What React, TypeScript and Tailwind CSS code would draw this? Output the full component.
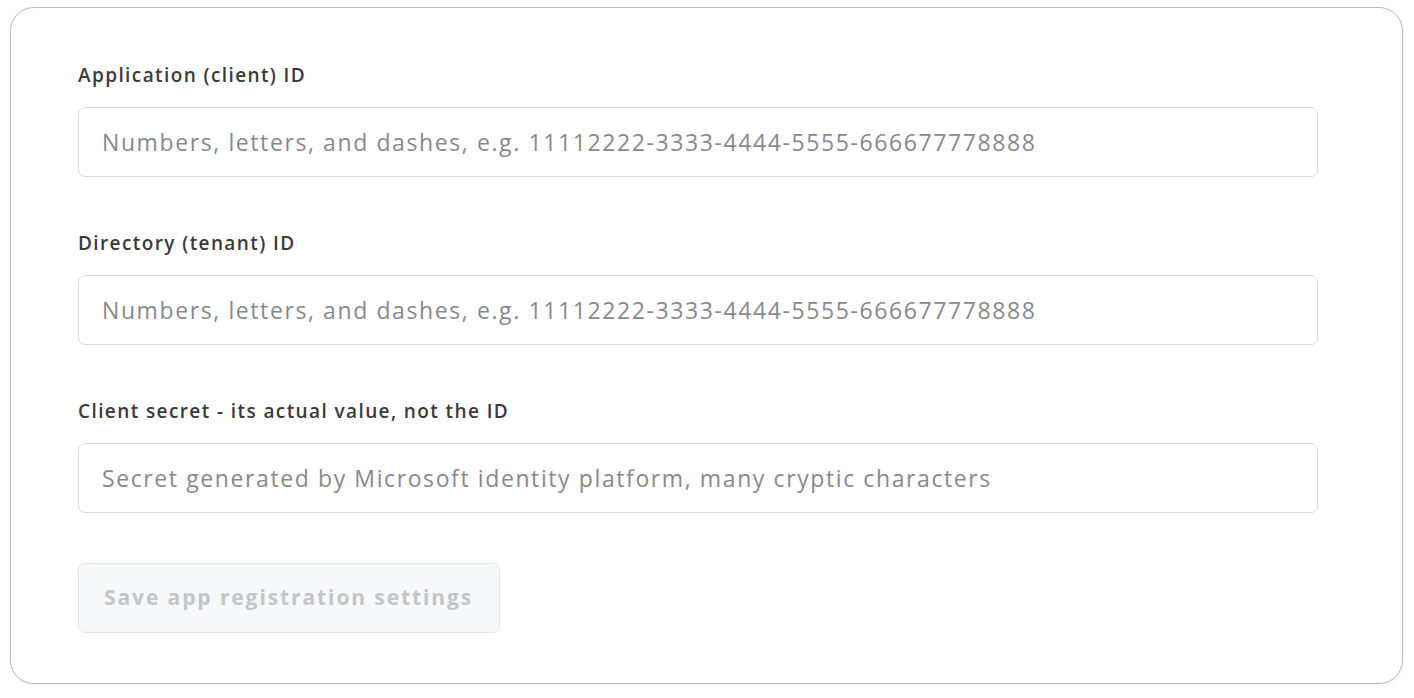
import React from "react";

const fields = [
  {
    label: "Application (client) ID",
    placeholder: "Numbers, letters, and dashes, e.g. 11112222-3333-4444-5555-666677778888",
  },
  {
    label: "Directory (tenant) ID",
    placeholder: "Numbers, letters, and dashes, e.g. 11112222-3333-4444-5555-666677778888",
  },
  {
    label: "Client secret - its actual value, not the ID",
    placeholder: "Secret generated by Microsoft identity platform, many cryptic characters",
  },
];

export default function App() {
  return (
    <div
      className="w-[1414px] h-[698px] bg-white pt-[7px] pl-[10px] pr-[11px]"
      style={{ fontFamily: "'Open Sans', 'Noto Sans', sans-serif" }}
    >
      <div className="h-[677px] rounded-[24px] border-[1.5px] border-[#bcbcbc] shadow-[0_1px_3px_rgba(0,0,0,0.08)] bg-white pl-[67px] pt-[55px]">
        <div className="w-[1240px] flex flex-col">
          {fields.map((f, i) => (
            <div key={i} className={i === 0 ? "" : "mt-[54px]"}>
              <div className="h-[24px] leading-[24px] text-[19px] font-semibold tracking-[1.4px] text-[#3a3a3a]">
                {f.label}
              </div>
              <div className="mt-[20px] h-[70px] rounded-[7px] border-[1.5px] border-[#dadada] flex items-center px-[23px] text-[23px] tracking-[1.6px] text-[#878a8c]">
                {f.placeholder}
              </div>
            </div>
          ))}
          <div className="mt-[50px]">
            <button className="w-[422px] h-[70px] rounded-[7px] border-[1.5px] border-[#e4e7ea] bg-[#f6f8fa] text-[21px] font-bold tracking-[1.9px] text-[#c3c6c9] flex items-center px-[25px]">
              Save app registration settings
            </button>
          </div>
        </div>
      </div>
    </div>
  );
}
